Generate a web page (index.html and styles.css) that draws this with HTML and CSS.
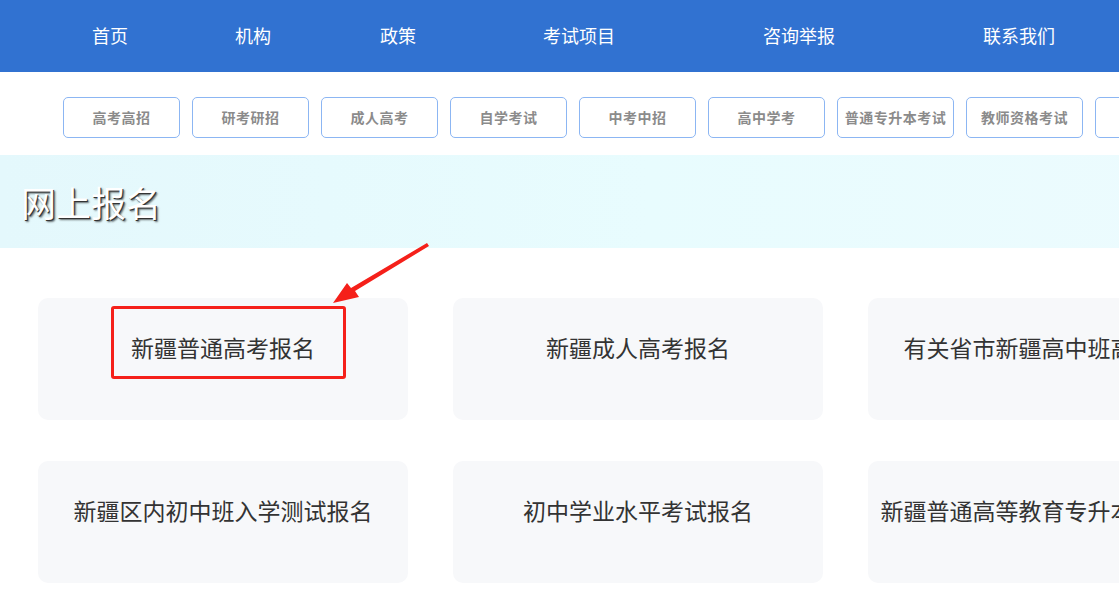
FILE: index.html
```html
<!DOCTYPE html>
<html lang="zh-CN">
<head>
    <meta charset="UTF-8">
    <meta name="viewport" content="width=device-width, initial-scale=1.0">
    <title>网上报名</title>
    <link rel="stylesheet" href="styles.css">
</head>
<body>
    <div class="page">
        <header class="nav">
            <ul class="nav-list">
                <li><a href="#">首页</a></li>
                <li><a href="#">机构</a></li>
                <li><a href="#">政策</a></li>
                <li><a href="#">考试项目</a></li>
                <li><a href="#">咨询举报</a></li>
                <li><a href="#">联系我们</a></li>
            </ul>
        </header>

        <div class="tabs">
            <a class="tab" href="#">高考高招</a>
            <a class="tab" href="#">研考研招</a>
            <a class="tab" href="#">成人高考</a>
            <a class="tab" href="#">自学考试</a>
            <a class="tab" href="#">中考中招</a>
            <a class="tab" href="#">高中学考</a>
            <a class="tab" href="#">普通专升本考试</a>
            <a class="tab" href="#">教师资格考试</a>
            <a class="tab" href="#">其他考试</a>
        </div>

        <div class="banner">
            <h2>网上报名</h2>
        </div>

        <main class="cards">
            <a class="card" href="#">新疆普通高考报名</a>
            <a class="card" href="#">新疆成人高考报名</a>
            <a class="card" href="#">有关省市新疆高中班高考报名</a>
            <a class="card" href="#">新疆区内初中班入学测试报名</a>
            <a class="card" href="#">初中学业水平考试报名</a>
            <a class="card" href="#">新疆普通高等教育专升本考试报名</a>
        </main>

        <!-- annotation drawn over the page -->
        <div class="mark-box"></div>
        <svg class="mark-arrow" width="110" height="70" viewBox="0 0 110 70">
            <polygon points="104,0 106,3 32,48 36,54 10,60 24,40 28,45" fill="#f5201a"/>
        </svg>
    </div>
</body>
</html>
```

FILE: styles.css
```css
body {
    margin: 0;
    font-family: "Noto Sans CJK SC", "Microsoft YaHei", sans-serif;
    background: #fff;
    overflow: hidden;
}

a {
    text-decoration: none;
}

.page {
    position: relative;
    width: 1300px;
}

.nav {
    height: 72px;
    background: #3172d1;
}

.nav-list {
    display: grid;
    grid-template-columns: 144px 142px 148px 214px 226px 214px;
    margin: 0;
    padding: 0 0 0 38px;
    list-style: none;
}

.nav-list li {
    text-align: center;
}

.nav-list a {
    display: block;
    line-height: 70px;
    font-size: 18px;
    color: #fff;
}

.tabs {
    display: flex;
    gap: 12px;
    padding: 25px 0 0 63px;
    margin-bottom: 17px;
}

.tab {
    flex: none;
    width: 115px;
    height: 39px;
    line-height: 39px;
    text-align: center;
    border: 1px solid #8cb6f3;
    border-radius: 5px;
    font-size: 14px;
    font-weight: bold;
    letter-spacing: 0.5px;
    color: #8b8b8b;
}

.banner {
    height: 93px;
    display: flex;
    align-items: center;
    padding-left: 21px;
    background: linear-gradient(90deg, #e4f8fc 0%, #e8fcfe 50%, #edfbfe 100%);
}

.banner h2 {
    margin: 0;
    font-size: 35px;
    font-weight: normal;
    color: #fff;
    letter-spacing: 0;
    text-shadow: 1px 1px 0 #333, 2px 2px 2px rgba(0, 0, 0, 0.6);
}

.cards {
    display: grid;
    grid-template-columns: repeat(3, 370px);
    column-gap: 45px;
    row-gap: 41px;
    padding: 50px 0 0 38px;
}

.card {
    height: 122px;
    box-sizing: border-box;
    padding-top: 34px;
    background: #f7f8fa;
    border-radius: 10px;
    text-align: center;
    white-space: nowrap;
    overflow: hidden;
    font-size: 23px;
    line-height: 30px;
    color: #333;
}

.mark-box {
    position: absolute;
    left: 111px;
    top: 306px;
    width: 229px;
    height: 67px;
    border: 3px solid #f5201a;
    border-radius: 3px;
}

.mark-arrow {
    position: absolute;
    left: 323px;
    top: 243px;
}
```
